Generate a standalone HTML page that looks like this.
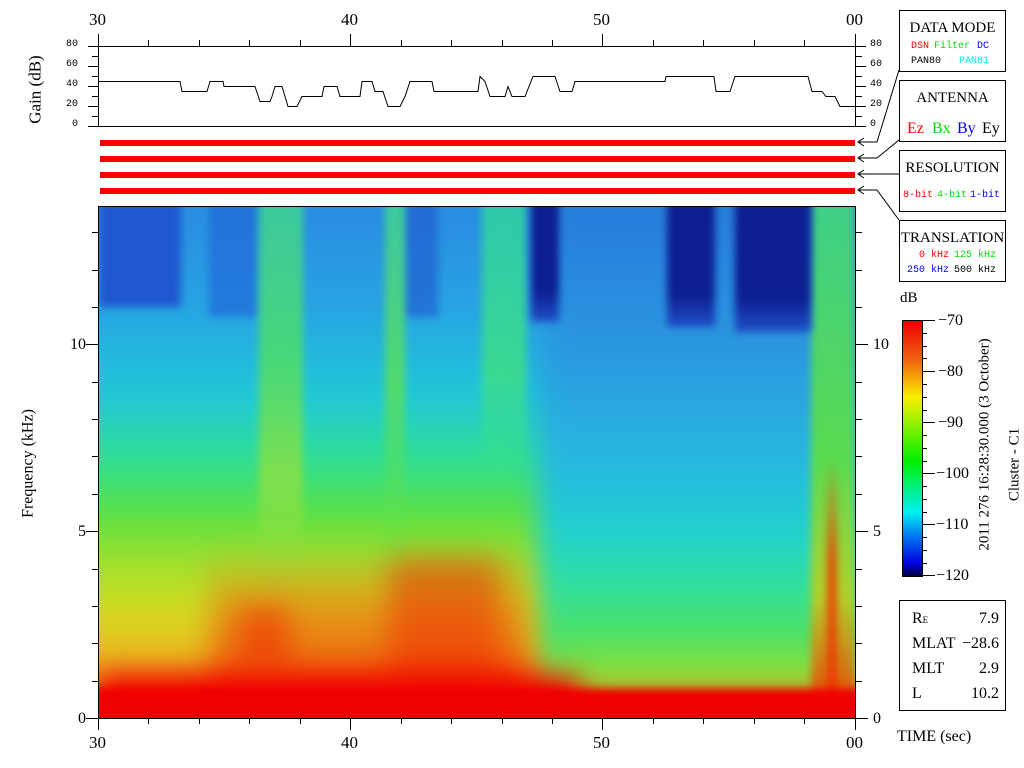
<!DOCTYPE html>
<html><head><meta charset="utf-8"><style>
body{margin:0;width:1024px;height:768px;background:#fff;position:relative;overflow:hidden;font-family:"Liberation Serif",serif;color:#000}
.a{position:absolute}
.t{position:absolute;font-size:15px;line-height:15px;white-space:nowrap}
.m{position:absolute;font-family:"Liberation Mono",monospace;font-size:10px;line-height:10px;white-space:nowrap}
.box{position:absolute;border:1px solid #000;background:#fff}
.bar{position:absolute;left:100px;width:755px;height:6px;background:#f00}
.c{position:absolute;filter:blur(4px)}
.s{position:absolute;filter:blur(14px)}
</style></head><body>
<div class="t" style="left:89px;top:12px;font-size:17px">30</div>
<div class="t" style="left:341px;top:12px;font-size:17px">40</div>
<div class="t" style="left:593px;top:12px;font-size:17px">50</div>
<div class="t" style="left:846px;top:12px;font-size:17px">00</div>
<div class="t" style="left:89px;top:735px;font-size:17px">30</div>
<div class="t" style="left:341px;top:735px;font-size:17px">40</div>
<div class="t" style="left:593px;top:735px;font-size:17px">50</div>
<div class="t" style="left:846px;top:735px;font-size:17px">00</div>

<div class="a" style="left:99px;top:207px;width:756px;height:511px;overflow:hidden;background:#20c0d8">
<div class="s" style="left:-30px;top:-20px;width:490px;height:551px;background:linear-gradient(to bottom,#2a88e0 0%,#28a0e4 20%,#20c8d8 38%,#30e090 50%,#60e040 60%,#a0e030 68%,#d0dc20 76%,#e8c020 84%,#f08018 90%,#f02000 95%,#f00000 98%)"></div>
<div class="s" style="left:440px;top:-20px;width:340px;height:551px;background:linear-gradient(to bottom,#2878dc 0%,#2a98e0 30%,#28b8e0 50%,#20d0d0 62%,#30e0a0 72%,#50e060 82%,#a0e030 90%,#f03010 95%,#f00000 98%)"></div>
<div class="c" style="left:0;top:-10px;width:82px;height:110px;background:#2058d0"></div>
<div class="c" style="left:110px;top:-10px;width:48px;height:120px;background:#2068d8;opacity:.7"></div>
<div class="c" style="left:305px;top:-10px;width:34px;height:120px;background:#2060d0;opacity:.7"></div>
<div class="c" style="left:160px;top:-10px;width:44px;height:400px;background:linear-gradient(#40d890,#50e060 40%,#90e040 70%,transparent);opacity:.8"></div>
<div class="c" style="left:286px;top:-10px;width:20px;height:380px;background:linear-gradient(#40d890,#60e050 50%,transparent);opacity:.8"></div>
<div class="c" style="left:383px;top:-10px;width:44px;height:300px;background:linear-gradient(#30d8a0,#40e080 60%,transparent);opacity:.8"></div>
<div class="c" style="left:712px;top:-10px;width:44px;height:531px;background:linear-gradient(#40d880,#60e040 50%,#c0d020 75%,#f02000);opacity:.9"></div>
<div class="c" style="left:728px;top:250px;width:10px;height:261px;background:linear-gradient(transparent,#f03000 40%);opacity:.8"></div>
<div class="c" style="left:432px;top:-10px;width:28px;height:125px;background:linear-gradient(#0c1e90 75%,#2050c8)"></div>
<div class="c" style="left:568px;top:-10px;width:48px;height:130px;background:linear-gradient(#0c1e90 75%,#2050c8)"></div>
<div class="c" style="left:636px;top:-10px;width:76px;height:135px;background:linear-gradient(#0c1e90 75%,#2050c8)"></div>
<div class="s" style="left:110px;top:340px;width:320px;height:171px;background:linear-gradient(transparent,#f06010 40%,#f02000 80%);opacity:.55"></div>
<div class="s" style="left:140px;top:400px;width:50px;height:60px;background:#f02000;opacity:.5"></div>
<div class="s" style="left:290px;top:350px;width:110px;height:161px;background:#f02000;opacity:.45"></div>
<div class="c" style="left:-10px;top:482px;width:776px;height:40px;background:#f00000"></div>
<div class="s" style="left:0;top:470px;width:480px;height:50px;background:#f00000"></div>
</div>

<svg class="a" style="left:0;top:0" width="1024" height="768">
<g stroke="#000" stroke-width="1" fill="none" shape-rendering="crispEdges">
<rect x="98.5" y="46.5" width="757" height="80"/>
<path d="M98.5 34V46 M148.5 40V46 M199.5 40V46 M249.5 40V46 M300.5 40V46 M350.5 34V46 M401.5 40V46 M451.5 40V46 M502.5 40V46 M552.5 40V46 M602.5 34V46 M653.5 40V46 M703.5 40V46 M754.5 40V46 M804.5 40V46 M855.5 34V46"/>
<path d="M88 46.5H98 M92 56.5H98 M88 66.5H98 M92 76.5H98 M88 86.5H98 M92 96.5H98 M88 106.5H98 M92 116.5H98 M88 126.5H98"/>
<path d="M856 46.5H866 M856 56.5H862 M856 66.5H866 M856 76.5H862 M856 86.5H866 M856 96.5H862 M856 106.5H866 M856 116.5H862 M856 126.5H866"/>
<rect x="98.5" y="206.5" width="757" height="512"/>
<path d="M98.5 718V730 M148.5 718V724 M199.5 718V724 M249.5 718V724 M300.5 718V724 M350.5 718V730 M401.5 718V724 M451.5 718V724 M502.5 718V724 M552.5 718V724 M602.5 718V730 M653.5 718V724 M703.5 718V724 M754.5 718V724 M804.5 718V724 M855.5 718V730"/>
<path d="M86 718.5H98 M92 681.5H98 M92 643.5H98 M92 606.5H98 M92 569.5H98 M86 531.5H98 M92 494.5H98 M92 456.5H98 M92 419.5H98 M92 382.5H98 M86 344.5H98 M92 307.5H98 M92 270.5H98 M92 232.5H98"/>
<path d="M856 718.5H868 M856 681.5H862 M856 643.5H862 M856 606.5H862 M856 569.5H862 M856 531.5H868 M856 494.5H862 M856 456.5H862 M856 419.5H862 M856 382.5H862 M856 344.5H868 M856 307.5H862 M856 270.5H862 M856 232.5H862"/>
<path d="M922 320.5H935 M922 333.5H927 M922 346.5H927 M922 358.5H927 M922 371.5H935 M922 384.5H927 M922 397.5H927 M922 410.5H927 M922 422.5H935 M922 435.5H927 M922 448.5H927 M922 461.5H927 M922 473.5H935 M922 486.5H927 M922 499.5H927 M922 512.5H927 M922 524.5H935 M922 537.5H927 M922 550.5H927 M922 563.5H927 M922 575.5H935"/>
</g>
<polyline fill="none" stroke="#000" stroke-width="1" points="98,81.5 180,81.5 182,91.5 207,91.5 210,81.5 223,81.5 224,86.5 255,86.5 260,101.5 270,101.5 272,96.5 275,86.5 282,86.5 288,106.5 297,106.5 302,96.5 322,96.5 324,86.5 337,86.5 340,96.5 360,96.5 362,81.5 372,81.5 375,91.5 383,91.5 388,106.5 400,106.5 405,96.5 410,81.5 432,81.5 434,91.5 478,91.5 480,76.5 485,81.5 490,96.5 505,96.5 508,86.5 512,96.5 525,96.5 533,76.5 555,76.5 560,91.5 572,91.5 575,81.5 665,81.5 666,76.5 714,76.5 716,91.5 730,91.5 735,76.5 808,76.5 812,91.5 822,91.5 826,96.5 835,96.5 840,106.5 855,106.5"/>
<g stroke="#000" fill="none" stroke-width="1">
<path d="M899 70L877 142H858 M864 138L858 142L864 146"/>
<path d="M899 140L877 158H858 M864 154L858 158L864 162"/>
<path d="M899 174H858 M864 170L858 174L864 178"/>
<path d="M899 220L877 190H858 M864 186L858 190L864 194"/>
</g>
</svg>

<div class="m" style="left:66px;top:40px">80</div>
<div class="m" style="left:66px;top:60px">60</div>
<div class="m" style="left:66px;top:80px">40</div>
<div class="m" style="left:66px;top:100px">20</div>
<div class="m" style="left:72px;top:120px">0</div>
<div class="m" style="left:870px;top:40px">80</div>
<div class="m" style="left:870px;top:60px">60</div>
<div class="m" style="left:870px;top:80px">40</div>
<div class="m" style="left:870px;top:100px">20</div>
<div class="m" style="left:870px;top:120px">0</div>
<div class="t" style="left:-5px;top:82px;transform:rotate(-90deg);font-size:17px;width:80px;text-align:center">Gain (dB)</div>

<div class="bar" style="top:140px"></div>
<div class="bar" style="top:156px"></div>
<div class="bar" style="top:172px"></div>
<div class="bar" style="top:188px"></div>

<div class="t" style="left:78px;top:711px;font-size:16px">0</div>
<div class="t" style="left:78px;top:524px;font-size:16px">5</div>
<div class="t" style="left:70px;top:337px;font-size:16px">10</div>
<div class="t" style="left:873px;top:711px;font-size:16px">0</div>
<div class="t" style="left:873px;top:524px;font-size:16px">5</div>
<div class="t" style="left:873px;top:337px;font-size:16px">10</div>
<div class="t" style="left:-32px;top:456px;transform:rotate(-90deg);font-size:16px;width:120px;text-align:center">Frequency (kHz)</div>

<div class="box" style="left:899px;top:10px;width:105px;height:60px">
<div class="t" style="left:0;width:105px;text-align:center;top:10px;font-size:15px">DATA MODE</div>
<div class="m" style="left:11px;top:31px;color:#f00">DSN</div><div class="m" style="left:34px;top:31px;color:#0d0">Filter</div><div class="m" style="left:77px;top:31px;color:#00f">DC</div>
<div class="m" style="left:11px;top:46px">PAN80</div><div class="m" style="left:59px;top:46px;color:#0ee">PAN81</div>
</div>
<div class="box" style="left:899px;top:80px;width:105px;height:60px">
<div class="t" style="left:0;width:105px;text-align:center;top:10px">ANTENNA</div>
<div class="t" style="left:7px;top:40px;color:#f00;font-size:16px">Ez</div><div class="t" style="left:32px;top:40px;color:#0d0;font-size:16px">Bx</div><div class="t" style="left:57px;top:40px;color:#00f;font-size:16px">By</div><div class="t" style="left:82px;top:40px;font-size:16px">Ey</div>
</div>
<div class="box" style="left:899px;top:150px;width:105px;height:60px">
<div class="t" style="left:0;width:105px;text-align:center;top:10px">RESOLUTION</div>
<div class="m" style="left:3px;top:40px;color:#f00">8-bit</div><div class="m" style="left:37px;top:40px;color:#0d0">4-bit</div><div class="m" style="left:70px;top:40px;color:#00f">1-bit</div>
</div>
<div class="box" style="left:899px;top:220px;width:105px;height:60px">
<div class="t" style="left:0;width:105px;text-align:center;top:10px">TRANSLATION</div>
<div class="m" style="left:19px;top:30px;color:#f00">0 kHz</div><div class="m" style="left:54px;top:30px;color:#0d0">125 kHz</div>
<div class="m" style="left:7px;top:45px;color:#00f">250 kHz</div><div class="m" style="left:54px;top:45px">500 kHz</div>
</div>

<div class="t" style="left:900px;top:291px;font-size:15px">dB</div>
<div class="a" style="left:902px;top:320px;width:19px;height:255px;border:1px solid #000;background:linear-gradient(#f00000,#f06010 15%,#f8f000 30%,#80f000 42%,#00f000 55%,#00f0a0 68%,#00f0f0 75%,#0070f0 85%,#0000e0 95%,#000040)"></div>
<div class="t" style="left:938px;top:313px;font-size:16px">−70</div>
<div class="t" style="left:938px;top:364px;font-size:16px">−80</div>
<div class="t" style="left:938px;top:415px;font-size:16px">−90</div>
<div class="t" style="left:936px;top:466px;font-size:16px">−100</div>
<div class="t" style="left:936px;top:517px;font-size:16px">−110</div>
<div class="t" style="left:936px;top:568px;font-size:16px">−120</div>
<div class="t" style="left:865px;top:437px;transform:rotate(-90deg);font-size:15px;width:240px;text-align:center">2011 276 16:28:30.000 (3 October)</div>
<div class="t" style="left:965px;top:457px;transform:rotate(-90deg);font-size:15px;width:100px;text-align:center">Cluster - C1</div>

<div class="box" style="left:899px;top:600px;width:105px;height:109px">
<div class="t" style="left:12px;top:10px;font-size:16px">R<span style="font-size:9px">E</span></div><div class="t" style="right:6px;top:10px;font-size:16px">7.9</div>
<div class="t" style="left:12px;top:35px;font-size:16px">MLAT</div><div class="t" style="right:6px;top:35px;font-size:16px">−28.6</div>
<div class="t" style="left:12px;top:60px;font-size:16px">MLT</div><div class="t" style="right:6px;top:60px;font-size:16px">2.9</div>
<div class="t" style="left:12px;top:85px;font-size:16px">L</div><div class="t" style="right:6px;top:85px;font-size:16px">10.2</div>
</div>
<div class="t" style="left:897px;top:729px;font-size:16px">TIME (sec)</div>
</body></html>
